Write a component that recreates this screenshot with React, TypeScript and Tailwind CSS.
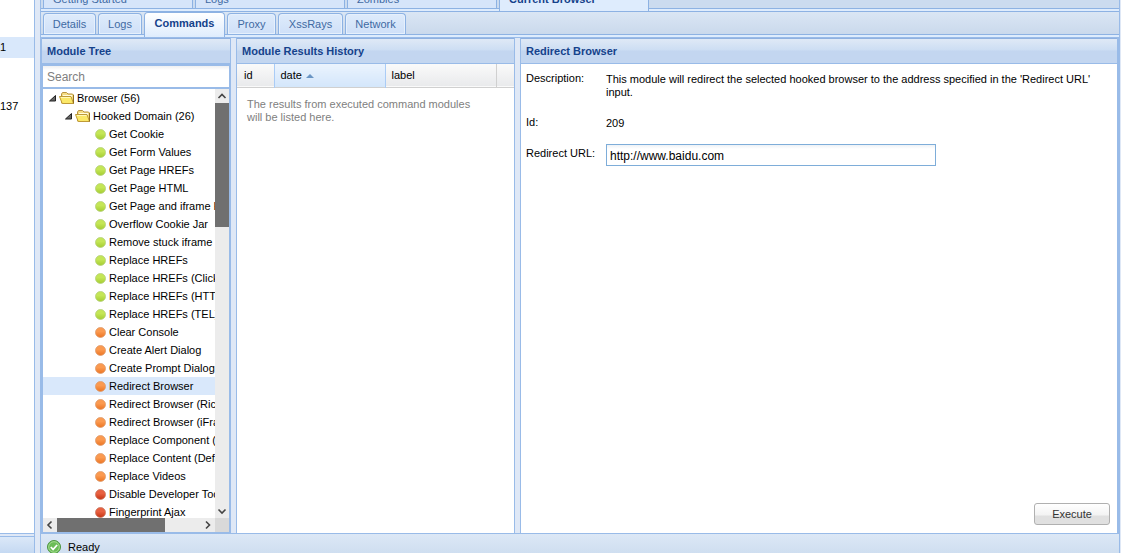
import type { ReactNode } from 'react'
import { clsx } from 'clsx'

type Status = 'green' | 'orange' | 'red'

const modules: { name: string; status: Status }[] = [
  { name: 'Get Cookie', status: 'green' },
  { name: 'Get Form Values', status: 'green' },
  { name: 'Get Page HREFs', status: 'green' },
  { name: 'Get Page HTML', status: 'green' },
  { name: 'Get Page and iframe HTML', status: 'green' },
  { name: 'Overflow Cookie Jar', status: 'green' },
  { name: 'Remove stuck iframe', status: 'green' },
  { name: 'Replace HREFs', status: 'green' },
  { name: 'Replace HREFs (Click Events)', status: 'green' },
  { name: 'Replace HREFs (HTTPS)', status: 'green' },
  { name: 'Replace HREFs (TEL)', status: 'green' },
  { name: 'Clear Console', status: 'orange' },
  { name: 'Create Alert Dialog', status: 'orange' },
  { name: 'Create Prompt Dialog', status: 'orange' },
  { name: 'Redirect Browser', status: 'orange' },
  { name: 'Redirect Browser (Rickroll)', status: 'orange' },
  { name: 'Redirect Browser (iFrame)', status: 'orange' },
  { name: 'Replace Component (Deface)', status: 'orange' },
  { name: 'Replace Content (Deface)', status: 'orange' },
  { name: 'Replace Videos', status: 'orange' },
  { name: 'Disable Developer Tools', status: 'red' },
  { name: 'Fingerprint Ajax', status: 'red' },
]

const lights: Record<Status, string[]> = {
  green: ['#c4e656', '#a4cc30', '#b4cf7a'],
  orange: ['#fb9a50', '#ec7422', '#dd9a6c'],
  red: ['#e86040', '#c63412', '#c87864'],
}

function Light({ status }: { status: Status }) {
  const [top, bottom, edge] = lights[status]
  return (
    <svg viewBox="0 0 16 16" className="size-4 shrink-0" aria-hidden="true">
      <defs>
        <linearGradient id={`light-${status}`} x1="0" y1="0" x2="0" y2="1">
          <stop offset="0" stopColor={top} />
          <stop offset="0.4" stopColor={top} />
          <stop offset="1" stopColor={bottom} />
        </linearGradient>
      </defs>
      <circle cx="7.5" cy="8.5" r="5" fill={`url(#light-${status})`} stroke={edge} strokeWidth="0.8" />
    </svg>
  )
}

function Folder() {
  return (
    <svg viewBox="0 0 16 16" className="size-4 shrink-0" aria-hidden="true">
      <path d="M2.5 13V4l1-1.500h4L9 4h4.500l1 1v8z" fill="#f4dc84" stroke="#b8933f" />
      <path d="M4 5h9v2H4z" fill="#fffbe0" />
      <path d="M3.200 13.500 0.500 6.500h11.500l2.500 7z" fill="#fbe868" stroke="#bf9a38" strokeLinejoin="round" />
      <path d="M1.800 7.500h9.600" stroke="#fff8b8" />
      <path d="M14.500 5v8.500" stroke="#94701c" />
    </svg>
  )
}

function Expander() {
  return (
    <svg viewBox="0 0 16 16" className="-mr-1 size-4 shrink-0" aria-hidden="true">
      <path d="M8.500 5.500v5.500h-6z" fill="#666" stroke="#222" strokeLinejoin="round" />
    </svg>
  )
}

function Chevron({ d }: { d: string }) {
  return (
    <svg viewBox="0 0 14 14" className="size-[14px] shrink-0" aria-hidden="true">
      <path d={d} fill="none" stroke="#444" strokeWidth="1.6" />
    </svg>
  )
}

function PanelHeader({ children }: { children: ReactNode }) {
  return (
    <h2 className="h-[26px] shrink-0 truncate border-y border-t-[#8fb0e0] border-b-[#99bbe8] bg-linear-to-b from-[#dfe9f6] from-0% via-[#cddef3] via-45% to-[#c3d6f0] to-50% pl-[5px] leading-[25px] font-bold text-[#15428b]">
      {children}
    </h2>
  )
}

function Tab({ label, active, className }: { label: string; active?: boolean; className?: string }) {
  return (
    <button
      type="button"
      role="tab"
      aria-selected={!!active}
      className={clsx(
        'shrink-0 rounded-t border border-b-0 border-[#8db2e3]',
        active
          ? 'z-10 -mb-[3px] h-[25px] bg-linear-to-b from-white to-[#deecfd] pb-[3px] font-bold text-[#15428b]'
          : 'h-[21px] bg-linear-to-b from-[#deebfb] to-[#cfe0f8] text-[#416aa3] shadow-[inset_0_0_0_1px_#e6f0fc]',
        className,
      )}
    >
      {label}
    </button>
  )
}

function OuterTab({ label, active }: { label: string; active?: boolean }) {
  return (
    <button
      type="button"
      role="tab"
      aria-selected={!!active}
      className={clsx(
        'flex w-[150px] shrink-0 items-end border-x border-[#8db2e3] pl-[9px] leading-[13px]',
        active ? 'z-10 -mb-[3px] h-6 bg-[#deecfd] pb-[5px] font-bold text-[#15428b]' : 'h-[21px] bg-[#d6e5fa] pb-[2px] text-[#416aa3]',
      )}
    >
      {label}
    </button>
  )
}

function ModuleTree() {
  return (
    <section className="flex w-[190px] shrink-0 flex-col border-x border-[#99bbe8]">
      <PanelHeader>Module Tree</PanelHeader>
      <div className="flex min-h-0 grow flex-col border border-t-2 border-[#99bbe8]">
        <input
          type="text"
          aria-label="Search"
          placeholder="Search"
          className="h-[21px] w-full shrink-0 bg-white bg-linear-to-b from-[#eef0f2] to-white to-20% pl-1 text-[12px] outline-none placeholder:text-[#808080]"
        />
        <div className="flex min-h-0 grow border-t-2 border-[#99bbe8]">
          <ul role="tree" aria-label="Modules" className="min-w-0 grow overflow-hidden bg-white whitespace-nowrap">
            <li role="treeitem" className="flex h-[18px] items-center pl-1">
              <Expander />
              <Folder />
              <span className="pl-[2px]">Browser (56)</span>
            </li>
            <li role="treeitem" className="flex h-[18px] items-center pl-5">
              <Expander />
              <Folder />
              <span className="pl-[2px]">Hooked Domain (26)</span>
            </li>
            {modules.map((m) => (
              <li
                key={m.name}
                role="treeitem"
                aria-selected={m.name === 'Redirect Browser'}
                className="flex h-[18px] items-center pl-[50px] aria-selected:bg-[#d9e8fb]"
              >
                <Light status={m.status} />
                <span>{m.name}</span>
              </li>
            ))}
          </ul>
          <div className="flex w-[14px] shrink-0 flex-col bg-[#ececec]">
            <Chevron d="M3.500 9 7 5.500 10.500 9" />
            <div className="h-[29%] bg-[#707070]" />
            <div className="grow" />
            <Chevron d="M3.500 5.500 7 9l3.500-3.500" />
          </div>
        </div>
        <div className="flex h-[14px] shrink-0 items-center bg-[#ececec]">
          <Chevron d="M8.500 3.500 5 7l3.500 3.500" />
          <div className="flex h-full grow">
            <div className="w-3/4 bg-[#707070]" />
          </div>
          <Chevron d="M5 3.500 8.500 7 5 10.500" />
          <div className="h-full w-[14px] bg-[#d9d9d9]" />
        </div>
      </div>
    </section>
  )
}

function ResultsHistory() {
  return (
    <section className="flex w-[279px] shrink-0 flex-col border-x border-[#99bbe8] bg-white">
      <PanelHeader>Module Results History</PanelHeader>
      <table className="w-full table-fixed border-collapse text-left">
        <thead>
          <tr className="h-[23px] border-b border-[#d0d0d0] bg-linear-to-b from-[#fafafa] to-[#e9eaec]">
            <th className="w-[37px] border-r border-[#aaccf6] pl-[7px] font-normal">id</th>
            <th className="w-[111px] border-r border-[#aaccf6] bg-linear-to-b from-[#ebf3fd] to-[#d3e6fb] pl-[6px] font-normal" aria-sort="ascending">
              date
              <svg viewBox="0 0 8 4" className="ml-1 inline h-1 w-2" aria-hidden="true">
                <path d="M0 4 4 0l4 4z" fill="#6a95c4" />
              </svg>
            </th>
            <th className="w-[111px] border-r border-[#d0d0d0] pl-[6px] font-normal">label</th>
            <th aria-label="Spacer" />
          </tr>
        </thead>
      </table>
      <p className="w-[245px] p-[10px] leading-[13px] text-[#808080]">
        The results from executed command modules will be listed here.
      </p>
    </section>
  )
}

function CommandForm() {
  return (
    <section className="flex min-w-0 grow flex-col border-r-2 border-l border-[#99bbe8] bg-white">
      <PanelHeader>Redirect Browser</PanelHeader>
      <form className="flex grow flex-col px-[5px] pt-2 pb-2 leading-[13px]">
        <dl className="grid grid-cols-[80px_1fr]">
          <dt>Description:</dt>
          <dd className="max-w-[500px] pt-px">
            This module will redirect the selected hooked browser to the address specified in the 'Redirect URL' input.
          </dd>
          <dt className="pt-[17px]">Id:</dt>
          <dd className="pt-[18px]">209</dd>
        </dl>
        <div className="mt-[14px] flex">
          <label htmlFor="redirect-url" className="w-20 shrink-0 pt-[3px]">
            Redirect URL:
          </label>
          <input
            id="redirect-url"
            type="text"
            defaultValue="http://www.baidu.com"
            className="h-[22px] w-[330px] border border-[#7eadd9] bg-linear-to-b from-[#eef2f6] to-white to-20% px-[3px] pt-px text-[12px] outline-none"
          />
        </div>
        <button
          type="button"
          className="mt-auto mr-[2px] h-[22px] w-[76px] self-end rounded-[3px] border border-[#b0b0b0] bg-linear-to-b from-white from-0% via-[#f3f3f3] via-55% to-[#e0e0e0] to-60% text-[#333]"
        >
          Execute
        </button>
      </form>
    </section>
  )
}

export default function App() {
  return (
    <div className="flex h-screen overflow-hidden bg-[#dfe8f6] font-['Liberation_Sans',Arial,sans-serif] text-[11px] text-black">
      <aside className="flex w-[35px] shrink-0 flex-col border-r border-[#99bbe8] bg-white">
        <div className="mt-[37px] h-[21px] bg-[#d9e8fb] leading-[21px]">1</div>
        <div className="mt-[38px] h-5 leading-[20px]">137</div>
        <div className="mt-auto h-5 border-t border-[#99bbe8] bg-[#dfe8f6] pt-[2px]">
          <div className="h-full border-t border-[#99bbe8] bg-linear-to-b from-[#dbe8f8] to-[#c5d9f2]" />
        </div>
      </aside>

      <main className="ml-[5px] mr-px flex min-w-0 grow flex-col border-x border-[#99bbe8]">
        <div role="tablist" className="flex h-[9px] shrink-0 items-end gap-[2px] border-b border-[#8db2e3] bg-[#cbdbef] pl-[2px]">
          <OuterTab label="Getting Started" />
          <OuterTab label="Logs" />
          <OuterTab label="Zombies" />
          <OuterTab label="Current Browser" active />
        </div>
        <div className="h-[2px] shrink-0 bg-[#deecfd]" />
        <div
          role="tablist"
          className="flex h-6 shrink-0 items-end gap-[2px] border-y border-[#8db2e3] bg-linear-to-b from-[#dae6f4] to-[#cad9ec] pl-[2px]"
        >
          <Tab label="Details" className="w-[53px]" />
          <Tab label="Logs" className="w-11" />
          <Tab label="Commands" active className="w-[81px]" />
          <Tab label="Proxy" className="w-[49px]" />
          <Tab label="XssRays" className="w-[65px]" />
          <Tab label="Network" className="w-[61px]" />
        </div>
        <div className="h-[2px] shrink-0 bg-[#deecfd]" />
        <div className="flex min-h-0 grow gap-[5px] border-y border-[#99bbe8]">
          <ModuleTree />
          <ResultsHistory />
          <CommandForm />
        </div>
        <footer className="flex h-[19px] shrink-0 items-start bg-linear-to-b from-[#dce8f6] to-[#cfdef0] pt-[5px] pl-[5px]">
          <svg viewBox="0 0 16 16" className="size-4 shrink-0" aria-hidden="true">
            <circle cx="8" cy="8" r="6.500" fill="#6cbc58" stroke="#4c9440" />
            <circle cx="8" cy="8" r="5.300" fill="none" stroke="#a5dc90" />
            <path d="m4.800 8 2.300 2.500 4-4.500" fill="none" stroke="#fff" strokeWidth="1.8" />
          </svg>
          <span className="pl-[6px] leading-[16px]">Ready</span>
        </footer>
      </main>
    </div>
  )
}
